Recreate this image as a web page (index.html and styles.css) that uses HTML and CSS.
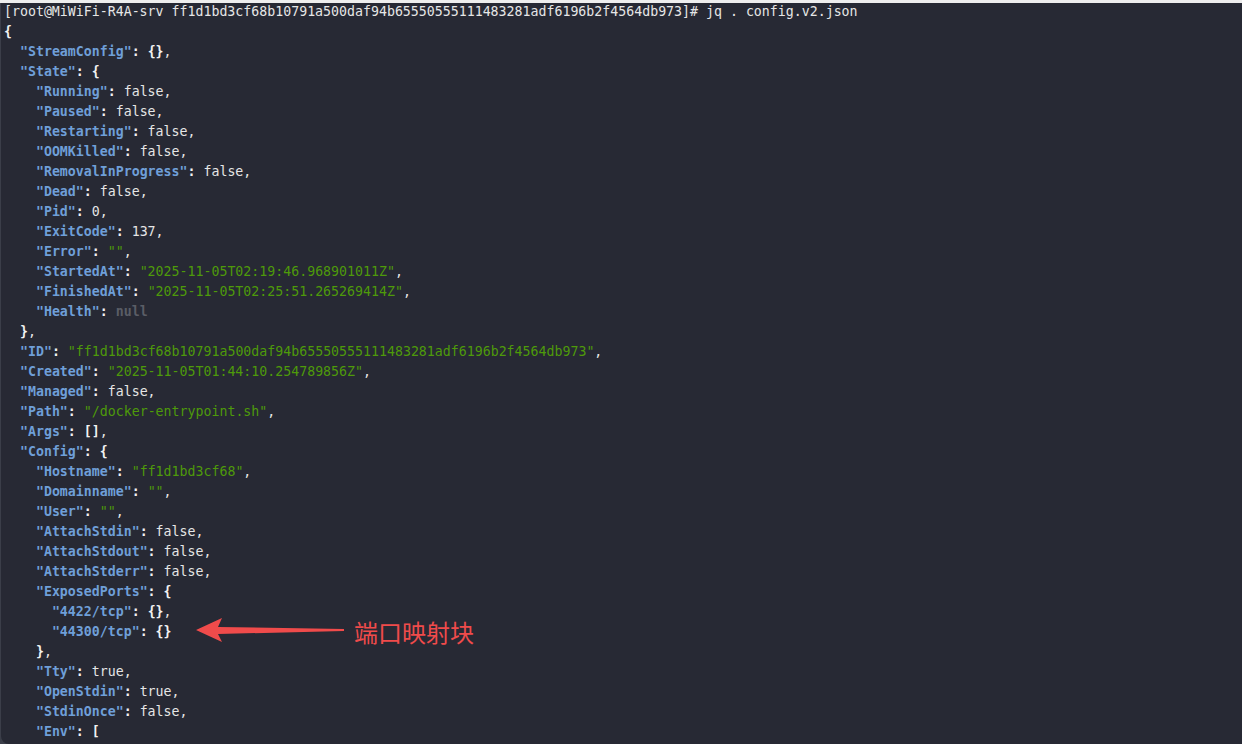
FILE: index.html
```html
<!DOCTYPE html>
<html>
<head>
<meta charset="utf-8">
<link rel="stylesheet" href="styles.css">
</head>
<body>
<div class="topbar"></div>
<div class="term">
<pre class="out"><span class="p">[root@MiWiFi-R4A-srv ff1d1bd3cf68b10791a500daf94b65550555111483281adf6196b2f4564db973]# jq . config.v2.json</span>
<b class="w">{</b>
  <b class="k">"StreamConfig"</b><b class="w">:</b> <b class="w">{}</b>,
  <b class="k">"State"</b><b class="w">:</b> <b class="w">{</b>
    <b class="k">"Running"</b><b class="w">:</b> false,
    <b class="k">"Paused"</b><b class="w">:</b> false,
    <b class="k">"Restarting"</b><b class="w">:</b> false,
    <b class="k">"OOMKilled"</b><b class="w">:</b> false,
    <b class="k">"RemovalInProgress"</b><b class="w">:</b> false,
    <b class="k">"Dead"</b><b class="w">:</b> false,
    <b class="k">"Pid"</b><b class="w">:</b> 0,
    <b class="k">"ExitCode"</b><b class="w">:</b> 137,
    <b class="k">"Error"</b><b class="w">:</b> <span class="s">""</span>,
    <b class="k">"StartedAt"</b><b class="w">:</b> <span class="s">"2025-11-05T02:19:46.968901011Z"</span>,
    <b class="k">"FinishedAt"</b><b class="w">:</b> <span class="s">"2025-11-05T02:25:51.265269414Z"</span>,
    <b class="k">"Health"</b><b class="w">:</b> <span class="n">null</span>
  <b class="w">}</b>,
  <b class="k">"ID"</b><b class="w">:</b> <span class="s">"ff1d1bd3cf68b10791a500daf94b65550555111483281adf6196b2f4564db973"</span>,
  <b class="k">"Created"</b><b class="w">:</b> <span class="s">"2025-11-05T01:44:10.254789856Z"</span>,
  <b class="k">"Managed"</b><b class="w">:</b> false,
  <b class="k">"Path"</b><b class="w">:</b> <span class="s">"/docker-entrypoint.sh"</span>,
  <b class="k">"Args"</b><b class="w">:</b> <b class="w">[]</b>,
  <b class="k">"Config"</b><b class="w">:</b> <b class="w">{</b>
    <b class="k">"Hostname"</b><b class="w">:</b> <span class="s">"ff1d1bd3cf68"</span>,
    <b class="k">"Domainname"</b><b class="w">:</b> <span class="s">""</span>,
    <b class="k">"User"</b><b class="w">:</b> <span class="s">""</span>,
    <b class="k">"AttachStdin"</b><b class="w">:</b> false,
    <b class="k">"AttachStdout"</b><b class="w">:</b> false,
    <b class="k">"AttachStderr"</b><b class="w">:</b> false,
    <b class="k">"ExposedPorts"</b><b class="w">:</b> <b class="w">{</b>
      <b class="k">"4422/tcp"</b><b class="w">:</b> <b class="w">{}</b>,
      <b class="k">"44300/tcp"</b><b class="w">:</b> <b class="w">{}</b>
    <b class="w">}</b>,
    <b class="k">"Tty"</b><b class="w">:</b> true,
    <b class="k">"OpenStdin"</b><b class="w">:</b> true,
    <b class="k">"StdinOnce"</b><b class="w">:</b> false,
    <b class="k">"Env"</b><b class="w">:</b> <b class="w">[</b></pre>
<div class="note">
<svg class="arrow" width="150" height="30" viewBox="0 0 150 30">
<path d="M0 15 L26 3 L22 12 L148 14 L148 16 L22 19 L26 27 Z" fill="#f04b4b"/>
</svg>
<span class="label">端口映射块</span>
</div>
</div>
</body>
</html>
```
FILE: styles.css
```css
html, body {
  margin: 0;
  padding: 0;
  background: #3b3e49;
  width: 1242px;
  height: 744px;
  overflow: hidden;
}
.topbar {
  height: 3px;
  background: #eeeeee;
}
.term {
  position: relative;
  height: 741px;
  margin-left: 1px;
  background: #272934;
  border-bottom-left-radius: 8px;
  overflow: hidden;
}
.out {
  margin: 0;
  padding: 0 0 0 3px;
  font-family: "DejaVu Sans Mono", monospace;
  font-size: 13.25px;
  line-height: 20px;
  color: #e6e6e6;
  position: relative;
  top: -1px;
}
.out b { font-weight: bold; }
.k { color: #6f9fd8; }
.w { color: #f2f2f2; }
.s { color: #4e9a0a; }
.n { color: #5a5d66; font-weight: bold; }
.p { color: #e6e6e6; }
.note {
  position: absolute;
  left: 195px;
  top: 608px;
  display: flex;
  align-items: center;
  gap: 8px;
}
.arrow { display: block; }
.label {
  font-family: "Noto Sans CJK SC", sans-serif;
  font-size: 24px;
  color: #f04b4b;
  line-height: 34px;
  margin-top: 4px;
}
```
